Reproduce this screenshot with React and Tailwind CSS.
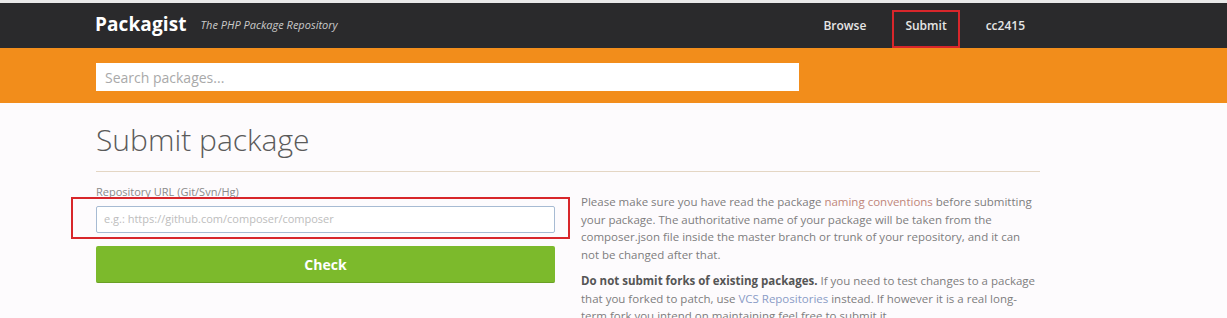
import React from 'react';

const font = { fontFamily: '"Open Sans", "Liberation Sans", sans-serif' };

const Header = () => (
    <header>
        <div className="h-[3px] bg-[#e9e9e9]" />
        <div className="h-[45px] bg-[#2a2a2c]">
            <div className="w-[944px] ml-[95px] h-full flex items-center">
                <span className="text-white font-bold text-[19px] tracking-[0.1px] -mt-[2px]">Packagist</span>
                <span className="ml-[14px] text-[#c9c9c9] italic text-[11px] -mt-[1px]">The PHP Package Repository</span>
                <nav className="ml-auto flex items-center h-full text-[12px] font-semibold text-[#e6e6e6]">
                    <a href="#" className="px-[14px] h-[38px] mt-[7px] mr-[12px] flex items-center -translate-y-[3px]">Browse</a>
                    <a href="#" className="relative px-[13px] h-[38px] mt-[7px] flex items-center">
                        <span className="-translate-y-[3px]">Submit</span>
                        <span className="absolute inset-0 border-2 border-[#d8262b]" />
                    </a>
                    <a href="#" className="px-[14px] h-[38px] mt-[7px] flex items-center ml-[12px] -translate-y-[3px]">cc2415</a>
                </nav>
            </div>
        </div>
        <div className="h-[55px] bg-[#f28d1b] pt-[15px]">
            <div className="ml-[96px] w-[703px] h-[28px] bg-white flex items-center px-[9px] text-[14px] text-[#a9a9a9]">
                Search packages...
            </div>
        </div>
    </header>
);

const App = () => {
    return (
        <div style={font} className="w-[1227px] h-[318px] overflow-hidden bg-[#fdfbfd]">
            <Header />
            <main className="ml-[96px] w-[944px]">
                <h1 className="pt-[15px] text-[30px] font-light text-[#5a5a5a] leading-[44px]">Submit package</h1>
                <div className="mt-[9px] h-px bg-[#e4d6c4]" />
                <div className="grid grid-cols-[459px_1fr] gap-x-[26px] mt-[12px]">
                    <div>
                        <label className="block text-[11px] text-[#8a8a8a] leading-[16px]">Repository URL (Git/Svn/Hg)</label>
                        <div className="relative mt-[6px]">
                            <div className="h-[27px] border border-[#a7bbd3] rounded-[2px] bg-white flex items-center px-[7px] text-[11px] text-[#bdbdbd]">
                                e.g.: https://github.com/composer/composer
                            </div>
                            <span className="absolute -left-[25px] -top-[9px] -right-[15px] -bottom-[6px] border-2 border-[#d8262b]" />
                        </div>
                        <button className="mt-[13px] w-full h-[37px] rounded-[2px] bg-[#7cba2c] text-white font-bold text-[14px] border-b border-[#6a9f25]">
                            Check
                        </button>
                    </div>
                    <div className="text-[11.5px] leading-[17.5px] text-[#7d7d7d] pt-[9px]">
                        <p>
                            Please make sure you have read the package <a href="#" className="text-[#c0867a]">naming conventions</a> before submitting
                            your package. The authoritative name of your package will be taken from the
                            composer.json file inside the master branch or trunk of your repository, and it can
                            not be changed after that.
                        </p>
                        <p className="mt-[9px]">
                            <strong className="font-bold text-[#555]">Do not submit forks of existing packages.</strong> If you need to test changes to a package
                            that you forked to patch, use <a href="#" className="text-[#8a9cc6]">VCS Repositories</a> instead. If however it is a real long-term
                            fork you intend on maintaining feel free to submit it.
                        </p>
                    </div>
                </div>
            </main>
        </div>
    );
};

export default App;
